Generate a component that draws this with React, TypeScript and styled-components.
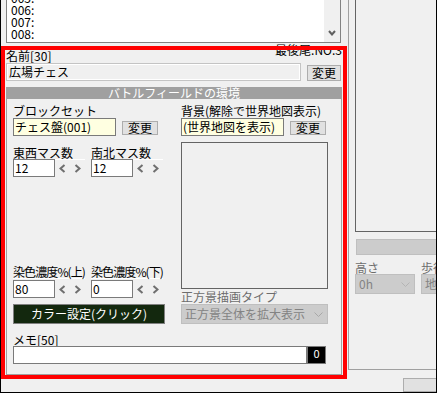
import React from 'react'
import styled, {createGlobalStyle} from 'styled-components'

const GlobalStyle = createGlobalStyle`
  html, body {
    margin: 0;
    padding: 0;
    background: #f0f0f0;
  }
  body {
    font-family: "Noto Sans CJK JP", "Noto Sans", sans-serif;
    font-size: 12px;
  }
`

const Window = styled.div`
  position: relative;
  width: 437px;
  height: 393px;
  box-sizing: border-box;
  border-left: 1px solid #000;
  border-right: 1px solid #000;
  border-bottom: 1px solid #000;
  background: #f0f0f0;
  display: flex;
  overflow: hidden;
  color: #000;
  font-size: 12px;
  line-height: 12px;
`

const LeftPane = styled.div`
  width: 347px;
  flex: none;
  box-sizing: border-box;
  padding-left: 5px;
  display: flex;
  flex-direction: column;
`

const List = styled.div`
  width: 335px;
  height: 43px;
  box-sizing: border-box;
  border: 1px solid #828282;
  border-top: none;
  background: #fff;
  display: flex;
  overflow: hidden;
`

const ListBody = styled.div`
  flex: 1;
  padding-left: 4px;
  margin-top: -8px;
`

const ListLine = styled.div`
  height: 12px;
  line-height: 12px;
`

const ScrollBar = styled.div`
  width: 16px;
  background: #f0f0f0;
  display: flex;
  align-items: flex-end;
  justify-content: center;
  padding-bottom: 6px;
  box-sizing: border-box;
`

const NameHeader = styled.div`
  width: 336px;
  height: 20px;
  display: flex;
  justify-content: space-between;
`

const NameLabel = styled.div`
  align-self: flex-end;
  margin-bottom: 1px;
`

const LastNo = styled.div`
  align-self: flex-start;
  margin-top: 1px;
`

const NameRow = styled.div`
  width: 336px;
  display: flex;
  align-items: flex-end;
  gap: 6px;
`

const TextBox = styled.div<{$w: number; $tone?: 'yellow' | 'white' | 'flat'}>`
  width: ${p => p.$w}px;
  height: 18px;
  box-sizing: border-box;
  flex: none;
  padding-left: ${p => (p.$tone === 'flat' ? 2 : 1)}px;
  line-height: 16px;
  white-space: nowrap;
  overflow: hidden;
  background: ${p => (p.$tone === 'yellow' ? '#ffffe1' : p.$tone === 'flat' ? '#f0f0f0' : '#fff')};
  border: 1px solid ${p => (p.$tone === 'flat' ? '#c4c4c4' : '#7a7a7a')};
  box-shadow: ${p => (p.$tone === 'flat' ? 'inset 0 0 0 1px #fff' : 'none')};
`

const Button = styled.div<{$w: number; $h: number; $top?: number}>`
  width: ${p => p.$w}px;
  height: ${p => p.$h}px;
  margin-top: ${p => p.$top || 0}px;
  box-sizing: border-box;
  flex: none;
  background: #e1e1e1;
  border: 1px solid #adadad;
  text-align: center;
  line-height: ${p => p.$h - 2}px;
`

const Group = styled.div`
  width: 336px;
  box-sizing: border-box;
  margin-top: 6px;
  border: 1px solid #a0a0a0;
  border-top: none;
  padding-bottom: 10px;
`

const GroupTitle = styled.div`
  height: 12px;
  margin: 0 -1px;
  background: #a0a0a0;
  color: #fff;
  text-align: center;
  line-height: 12px;
  overflow: hidden;
`

const Columns = styled.div`
  display: grid;
  grid-template-columns: 168px 147px;
  padding: 6px 0 0 6px;
`

const Column = styled.div`
  display: flex;
  flex-direction: column;
`

const Label = styled.div<{$top?: number; $muted?: boolean}>`
  height: 12px;
  line-height: 12px;
  margin-top: ${p => p.$top || 0}px;
  white-space: nowrap;
  color: ${p => (p.$muted ? '#6d6d6d' : '#000')};
`

const FieldRow = styled.div<{$top?: number}>`
  display: flex;
  align-items: flex-start;
  gap: 6px;
  margin-top: ${p => p.$top || 0}px;
`

const SpinLabels = styled.div<{$top?: number}>`
  display: flex;
  gap: 6px;
  margin-top: ${p => p.$top || 0}px;
`

const SpinLabel = styled.div<{$tight?: boolean}>`
  width: 72px;
  height: 12px;
  line-height: 12px;
  white-space: nowrap;
  letter-spacing: ${p => (p.$tight ? '-0.9px' : '0')};
  box-shadow: 0 1px 0 #fff;
`

const SpinRow = styled.div<{$top?: number}>`
  display: flex;
  margin-top: ${p => p.$top || 0}px;
`

const Spin = styled.div`
  width: 78px;
  display: flex;
  align-items: center;
`

const Arrows = styled.div`
  display: flex;
  gap: 8px;
  margin-left: 4px;
`

const DyeBlock = styled.div`
  margin-top: auto;
  display: flex;
  flex-direction: column;
`

const ColorButton = styled.div`
  width: 152px;
  height: 20px;
  margin-top: 6px;
  box-sizing: border-box;
  background: #13280e;
  border: 1px solid #808080;
  color: #fff;
  text-align: center;
  line-height: 18px;
`

const Preview = styled.div`
  width: 147px;
  height: 147px;
  margin-top: 6px;
  box-sizing: border-box;
  border: 1px solid #646464;
`

const Combo = styled.div<{$w: number; $h: number; $top?: number}>`
  width: ${p => p.$w}px;
  height: ${p => p.$h}px;
  margin-top: ${p => p.$top || 0}px;
  box-sizing: border-box;
  flex: none;
  background: #cccccc;
  border: 1px solid #bfbfbf;
  color: #838383;
  display: flex;
  align-items: center;
  justify-content: space-between;
  padding: 0 4px 0 3px;
  white-space: nowrap;
  overflow: hidden;
`

const Memo = styled.div`
  padding-left: 6px;
`

const MemoRow = styled.div`
  display: flex;
`

const Counter = styled.div`
  width: 19px;
  height: 18px;
  box-sizing: border-box;
  background: #000;
  border: 1px solid #7a7a7a;
  color: #fff;
  font-size: 11px;
  line-height: 12px;
  text-align: center;
`

const RightColumn = styled.div`
  flex: 1;
  min-width: 0;
  display: flex;
  flex-direction: column;
`

const RightFrame = styled.div`
  height: 374px;
  box-sizing: border-box;
  border-left: 1px solid #a0a0a0;
  border-bottom: 1px solid #a0a0a0;
  padding-left: 6px;
  display: flex;
  flex-direction: column;
  overflow: hidden;
`

const MapBox = styled.div`
  width: 140px;
  height: 232px;
  flex: none;
  box-sizing: border-box;
  border: 1px solid #646464;
  border-top: none;
`

const DisabledBar = styled.div`
  width: 140px;
  height: 16px;
  flex: none;
  margin: 7px 0 0 1px;
  box-sizing: border-box;
  background: #cccccc;
  border: 1px solid #bfbfbf;
`

const Selectors = styled.div`
  display: flex;
  gap: 6px;
  margin-top: 7px;
`

const Selector = styled.div`
  display: flex;
  flex-direction: column;
`

const CornerButton = styled.div`
  width: 40px;
  height: 14px;
  margin: 8px 0 0 55px;
  box-sizing: border-box;
  background: #e1e1e1;
  border: 1px solid #adadad;
`

const Highlight = styled.div`
  position: absolute;
  left: -1px;
  top: 46px;
  width: 347px;
  height: 333px;
  box-sizing: border-box;
  border-style: solid;
  border-color: #ff0000;
  border-width: 4px 4px 4px 5px;
  pointer-events: none;
  z-index: 5;
`

const Chevron = ({dir}: {dir: 'left' | 'right'}) => (
  <svg width="7" height="9" viewBox="0 0 7 9">
    <polyline
      points={dir === 'left' ? '5.5,1 1.5,4.5 5.5,8' : '1.5,1 5.5,4.5 1.5,8'}
      fill="none"
      stroke="#6f6f6f"
      strokeWidth="2"
    />
  </svg>
)

const DropArrow = ({color = '#a8a8a8'}: {color?: string}) => (
  <svg width="9" height="5" viewBox="0 0 9 5">
    <polyline points="0.5,0.5 4.5,4.5 8.5,0.5" fill="none" stroke={color} strokeWidth="1"/>
  </svg>
)

const ScrollDown = () => (
  <svg width="8" height="6" viewBox="0 0 8 6">
    <polyline points="1,1 4,4.5 7,1" fill="none" stroke="#606060" strokeWidth="2"/>
  </svg>
)

const SpinField = ({value}: {value: string}) => (
  <Spin>
    <TextBox $w={42} $tone="white">{value}</TextBox>
    <Arrows>
      <Chevron dir="left"/>
      <Chevron dir="right"/>
    </Arrows>
  </Spin>
)

const App: React.FC = () => {
  return (
    <>
      <GlobalStyle/>
      <Window>
        <LeftPane>
          <List>
            <ListBody>
              {['005:', '006:', '007:', '008:'].map(line => (
                <ListLine key={line}>{line}</ListLine>
              ))}
            </ListBody>
            <ScrollBar>
              <ScrollDown/>
            </ScrollBar>
          </List>

          <NameHeader>
            <NameLabel>名前[30]</NameLabel>
            <LastNo>最後尾:NO.3</LastNo>
          </NameHeader>
          <NameRow>
            <TextBox $w={295} $tone="flat">広場チェス</TextBox>
            <Button $w={34} $h={16}>変更</Button>
          </NameRow>

          <Group>
            <GroupTitle>バトルフィールドの環境</GroupTitle>
            <Columns>
              <Column>
                <Label>ブロックセット</Label>
                <FieldRow $top={1}>
                  <TextBox $w={103} $tone="yellow">チェス盤(001)</TextBox>
                  <Button $w={36} $h={14} $top={3}>変更</Button>
                </FieldRow>

                <SpinLabels $top={11}>
                  <SpinLabel>東西マス数</SpinLabel>
                  <SpinLabel>南北マス数</SpinLabel>
                </SpinLabels>
                <SpinRow>
                  <SpinField value="12"/>
                  <SpinField value="12"/>
                </SpinRow>

                <DyeBlock>
                  <SpinLabels>
                    <SpinLabel $tight>染色濃度%(上)</SpinLabel>
                    <SpinLabel $tight>染色濃度%(下)</SpinLabel>
                  </SpinLabels>
                  <SpinRow $top={2}>
                    <SpinField value="80"/>
                    <SpinField value="0"/>
                  </SpinRow>
                  <ColorButton>カラー設定(クリック)</ColorButton>
                </DyeBlock>
              </Column>

              <Column>
                <Label>背景(解除で世界地図表示)</Label>
                <FieldRow $top={1}>
                  <TextBox $w={103} $tone="yellow">(世界地図を表示)</TextBox>
                  <Button $w={36} $h={14} $top={3}>変更</Button>
                </FieldRow>
                <Preview/>
                <Label $top={2} $muted>正方景描画タイプ</Label>
                <Combo $w={147} $h={20} $top={1}>
                  <span>正方景全体を拡大表示</span>
                  <DropArrow/>
                </Combo>
              </Column>
            </Columns>

            <Memo>
              <Label $top={10}>メモ[50]</Label>
              <MemoRow>
                <TextBox $w={294} $tone="white"/>
                <Counter>0</Counter>
              </MemoRow>
            </Memo>
          </Group>
        </LeftPane>

        <RightColumn>
          <RightFrame>
            <MapBox/>
            <DisabledBar/>
            <Selectors>
              <Selector>
                <Label $muted>高さ</Label>
                <Combo $w={60} $h={20}>
                  <span>0h</span>
                  <DropArrow color="#b4b4b4"/>
                </Combo>
              </Selector>
              <Selector>
                <Label $muted>歩行</Label>
                <Combo $w={60} $h={20}>
                  <span>地上</span>
                  <DropArrow color="#b4b4b4"/>
                </Combo>
              </Selector>
            </Selectors>
          </RightFrame>
          <CornerButton/>
        </RightColumn>

        <Highlight/>
      </Window>
    </>
  )
}

export default App
